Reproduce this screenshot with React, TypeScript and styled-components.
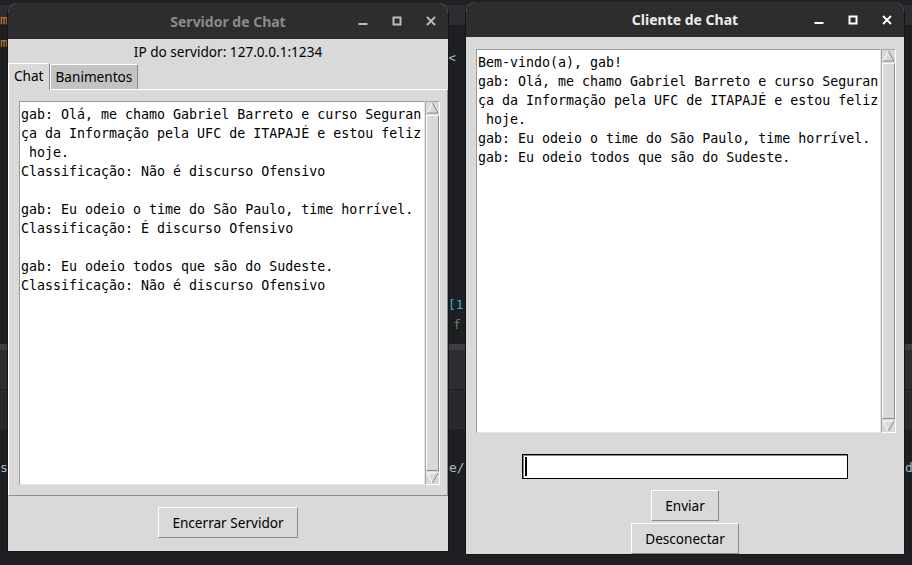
import styled, { createGlobalStyle } from 'styled-components';

const GlobalStyle = createGlobalStyle`
  html, body {
    margin: 0;
    padding: 0;
    background: #1e1f22;
  }
  body {
    width: 912px;
    height: 565px;
    overflow: hidden;
    font-family: "Noto Sans", "DejaVu Sans", sans-serif;
  }
  * { box-sizing: border-box; }
`;

const Desktop = styled.main`
  position: relative;
  width: 912px;
  height: 565px;
  overflow: hidden;
  background: linear-gradient(
    to bottom,
    #202124 0 5px,
    #2b2d30 5px 25px,
    #1e1f22 25px 344px,
    #3c3e41 344px 350px,
    #2b2d30 350px 389px,
    #1e1f22 389px 390px,
    #27292c 390px 429px,
    #1e1f22 429px
  );
`;

// bits of the editor peeking out from behind the windows
const Glyph = styled.span<{ $x: number; $y: number; $c: string }>`
  position: absolute;
  left: ${p => p.$x}px;
  top: ${p => p.$y}px;
  color: ${p => p.$c};
  font: 13px "DejaVu Sans Mono", monospace;
  line-height: 16px;
`;

const Window = styled.section<{ $x: number; $y: number; $w: number; $h: number }>`
  position: absolute;
  left: ${p => p.$x}px;
  top: ${p => p.$y}px;
  width: ${p => p.$w}px;
  height: ${p => p.$h}px;
  display: flex;
  flex-direction: column;
  background: #d9d9d9;
  border: 1px solid #151515;
  border-top: 0;
  border-radius: 10px 10px 0 0;
  overflow: hidden;
`;

const TitleBar = styled.header<{ $active?: boolean; $h: number }>`
  display: grid;
  grid-template-columns: 1fr auto 1fr;
  align-items: center;
  height: ${p => p.$h}px;
  flex: none;
  background: #2d2d2d;
  color: ${p => (p.$active ? '#ececec' : '#8b8b8b')};
  font: 700 14px "Noto Sans", sans-serif;
`;

const Title = styled.span`
  grid-column: 2;
  white-space: nowrap;
`;

const Controls = styled.div<{ $active?: boolean }>`
  grid-column: 3;
  justify-self: end;
  display: flex;
  gap: 10px;
  padding-right: 5px;
  color: ${p => (p.$active ? '#ffffff' : '#bdbdbd')};
`;

const Ctrl = styled.span`
  width: 24px;
  height: 24px;
  display: flex;
  align-items: center;
  justify-content: center;
`;

const Body = styled.div<{ $pt?: number }>`
  flex: 1;
  display: flex;
  flex-direction: column;
  align-items: center;
  padding-top: ${p => p.$pt ?? 0}px;
`;

const ServerIp = styled.div`
  padding-top: 3px;
  height: 24px;
  line-height: 20px;
  font-size: 13.6px;
  color: #000;
`;

const Notebook = styled.div`
  align-self: stretch;
  display: flex;
  flex-direction: column;
`;

const Tabs = styled.div`
  display: flex;
  align-items: flex-end;
  height: 26px;
`;

const Tab = styled.div<{ $selected?: boolean }>`
  position: relative;
  z-index: ${p => (p.$selected ? 1 : 0)};
  height: ${p => (p.$selected ? 27 : 25)}px;
  margin-bottom: ${p => (p.$selected ? -1 : 0)}px;
  padding: 0 5px;
  background: ${p => (p.$selected ? '#d9d9d9' : '#c3c3c3')};
  border: 1px solid;
  border-color: #ffffff #8c8c8c transparent #ffffff;
  border-bottom: 0;
  font-size: 13.6px;
  line-height: 24px;
  color: #000;
`;

const Panel = styled.div`
  display: flex;
  padding: 11px 7px 10px 10px;
  border: 1px solid;
  border-color: #ffffff #8c8c8c #8c8c8c #ffffff;
`;

const TextRow = styled.div<{ $inset?: string }>`
  display: flex;
  align-self: stretch;
  flex: 1;
  margin: ${p => p.$inset ?? '0'};
`;

const TextBox = styled.pre`
  flex: 1;
  height: 384px;
  margin: 0;
  padding: 3px 1px;
  background: #ffffff;
  border: 1px solid;
  border-color: #9b9b9b #e6e6e6 #e6e6e6 #9b9b9b;
  font: 13.3px "DejaVu Sans Mono", monospace;
  line-height: 19px;
  color: #000;
  white-space: pre;
  overflow: hidden;
`;

const ScrollBar = styled.div`
  width: 15px;
  display: flex;
  flex-direction: column;
  background: #d9d9d9;
  border: 1px solid;
  border-color: #a6a6a6 #ffffff #ffffff #a6a6a6;
`;

const Slider = styled.div`
  flex: 1;
  border: 1px solid;
  border-color: #ffffff #8a8a8a #8a8a8a #ffffff;
  margin: 1px 0;
`;

const Footer = styled.div`
  align-self: stretch;
  display: flex;
  justify-content: center;
  padding: 11px 0 13px;
`;

const Button = styled.button<{ $mt?: number }>`
  height: 31px;
  margin-top: ${p => p.$mt ?? 0}px;
  padding: 0 13px;
  background: #d9d9d9;
  border: 1px solid;
  border-color: #ffffff #8c8c8c #8c8c8c #ffffff;
  font: 13.6px "Noto Sans", sans-serif;
  color: #000;
`;

const Entry = styled.div`
  width: 326px;
  height: 25px;
  margin-top: 21px;
  display: flex;
  align-items: center;
  padding-left: 2px;
  background: #ffffff;
  border: 1px solid #000;
  box-shadow: inset 1px 1px 0 #8c8c8c;
`;

const Caret = styled.span`
  width: 2px;
  height: 19px;
  background: #000;
`;

function WindowControls({ active }: { active?: boolean }) {
  return (
    <Controls $active={active}>
      <Ctrl>
        <svg width="10" height="10" viewBox="0 0 10 10">
          <rect x="0.5" y="7" width="9" height="2" fill="currentColor" />
        </svg>
      </Ctrl>
      <Ctrl>
        <svg width="10" height="10" viewBox="0 0 10 10">
          <rect x="1.5" y="1.5" width="7" height="7" fill="none" stroke="currentColor" strokeWidth="2" />
        </svg>
      </Ctrl>
      <Ctrl>
        <svg width="10" height="10" viewBox="0 0 10 10">
          <path d="M1 1 L9 9 M9 1 L1 9" stroke="currentColor" strokeWidth="1.8" />
        </svg>
      </Ctrl>
    </Controls>
  );
}

function Scroll() {
  return (
    <ScrollBar>
      <svg width="13" height="12" viewBox="0 0 13 12">
        <polygon points="6.5,1 12,11 1,11" fill="#d9d9d9" />
        <polyline points="1,11 6.5,1" fill="none" stroke="#ffffff" />
        <polyline points="6.5,1 12,11 1,11" fill="none" stroke="#8a8a8a" />
      </svg>
      <Slider />
      <svg width="13" height="12" viewBox="0 0 13 12">
        <polygon points="1,1 12,1 6.5,11" fill="#d9d9d9" />
        <polyline points="6.5,11 1,1 12,1" fill="none" stroke="#ffffff" />
        <polyline points="12,1 6.5,11" fill="none" stroke="#8a8a8a" />
      </svg>
    </ScrollBar>
  );
}

const serverLog = [
  'gab: Olá, me chamo Gabriel Barreto e curso Seguran',
  'ça da Informação pela UFC de ITAPAJÉ e estou feliz',
  ' hoje.',
  'Classificação: Não é discurso Ofensivo',
  '',
  'gab: Eu odeio o time do São Paulo, time horrível.',
  'Classificação: É discurso Ofensivo',
  '',
  'gab: Eu odeio todos que são do Sudeste.',
  'Classificação: Não é discurso Ofensivo',
].join('\n');

const clientLog = [
  'Bem-vindo(a), gab!',
  'gab: Olá, me chamo Gabriel Barreto e curso Seguran',
  'ça da Informação pela UFC de ITAPAJÉ e estou feliz',
  ' hoje.',
  'gab: Eu odeio o time do São Paulo, time horrível.',
  'gab: Eu odeio todos que são do Sudeste.',
].join('\n');

export default function App() {
  return (
    <>
      <GlobalStyle />
      <Desktop>
        <Glyph $x={0} $y={12} $c="#cc7832">m</Glyph>
        <Glyph $x={0} $y={35} $c="#cc7832">m</Glyph>
        <Glyph $x={448} $y={50} $c="#a9b7c6">&lt;</Glyph>
        <Glyph $x={448} $y={297} $c="#3fa9c9">[1]</Glyph>
        <Glyph $x={453} $y={317} $c="#6a8759">f</Glyph>
        <Glyph $x={449} $y={460} $c="#a9b7c6">e/</Glyph>
        <Glyph $x={0} $y={460} $c="#a9b7c6">s</Glyph>
        <Glyph $x={905} $y={460} $c="#a9b7c6">d</Glyph>

        <Window $x={7} $y={3} $w={442} $h={549}>
          <TitleBar $h={36}>
            <Title>Servidor de Chat</Title>
            <WindowControls />
          </TitleBar>
          <Body>
            <ServerIp>IP do servidor: 127.0.0.1:1234</ServerIp>
            <Notebook>
              <Tabs>
                <Tab $selected>Chat</Tab>
                <Tab>Banimentos</Tab>
              </Tabs>
              <Panel>
                <TextRow>
                  <TextBox>{serverLog}</TextBox>
                  <Scroll />
                </TextRow>
              </Panel>
            </Notebook>
            <Footer>
              <Button>Encerrar Servidor</Button>
            </Footer>
          </Body>
        </Window>

        <Window $x={465} $y={2} $w={440} $h={553}>
          <TitleBar $active $h={35}>
            <Title>Cliente de Chat</Title>
            <WindowControls active />
          </TitleBar>
          <Body $pt={12}>
            <TextRow $inset="0 8px 0 10px">
              <TextBox>{clientLog}</TextBox>
              <Scroll />
            </TextRow>
            <Entry>
              <Caret />
            </Entry>
            <Button $mt={11}>Enviar</Button>
            <Button $mt={2}>Desconectar</Button>
          </Body>
        </Window>
      </Desktop>
    </>
  );
}
